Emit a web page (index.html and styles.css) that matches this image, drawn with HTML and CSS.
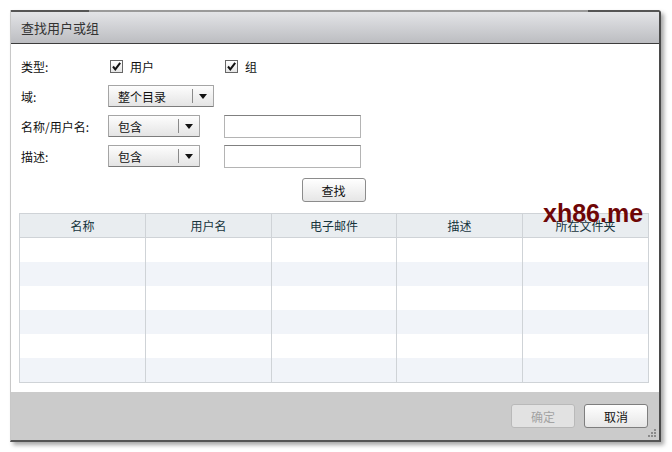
FILE: index.html
```html
<!DOCTYPE html>
<html>
<head>
<meta charset="utf-8">
<link rel="stylesheet" href="styles.css">
</head>
<body>
<div class="dialog">
  <div class="topline"></div>
  <div class="header">查找用户或组</div>
  <div class="content">
    <div class="form">
      <div class="row">
        <div class="label">类型:</div>
        <div class="field">
          <label class="check"><span class="box"><svg width="11" height="11" viewBox="0 0 11 11"><path d="M2 5.5 L4.3 8.3 L9.2 1.8" fill="none" stroke="#111" stroke-width="2"/></svg></span>用户</label>
          <label class="check second"><span class="box"><svg width="11" height="11" viewBox="0 0 11 11"><path d="M2 5.5 L4.3 8.3 L9.2 1.8" fill="none" stroke="#111" stroke-width="2"/></svg></span>组</label>
        </div>
      </div>
      <div class="row">
        <div class="label">域:</div>
        <div class="field">
          <div class="select wide"><span class="stext">整个目录</span><span class="sep"></span><span class="arrow"></span></div>
        </div>
      </div>
      <div class="row">
        <div class="label">名称/用户名:</div>
        <div class="field">
          <div class="select"><span class="stext">包含</span><span class="sep"></span><span class="arrow"></span></div>
          <div class="input"></div>
        </div>
      </div>
      <div class="row">
        <div class="label">描述:</div>
        <div class="field">
          <div class="select"><span class="stext">包含</span><span class="sep"></span><span class="arrow"></span></div>
          <div class="input"></div>
        </div>
      </div>
    </div>
    <div class="searchrow"><button class="btn search">查找</button></div>
    <div class="table">
      <div class="thead">
        <div class="th">名称</div><div class="th">用户名</div><div class="th">电子邮件</div><div class="th">描述</div><div class="th">所在文件夹</div>
      </div>
      <div class="tr"><div></div><div></div><div></div><div></div><div></div></div>
      <div class="tr alt"><div></div><div></div><div></div><div></div><div></div></div>
      <div class="tr"><div></div><div></div><div></div><div></div><div></div></div>
      <div class="tr alt"><div></div><div></div><div></div><div></div><div></div></div>
      <div class="tr"><div></div><div></div><div></div><div></div><div></div></div>
      <div class="tr alt"><div></div><div></div><div></div><div></div><div></div></div>
    </div>
  </div>
  <div class="footer">
    <button class="btn disabled">确定</button>
    <button class="btn cancel">取消</button>
    <svg class="grip" width="10" height="10" viewBox="0 0 10 10"><g fill="#8a8a8a"><rect x="7" y="1" width="2" height="2"/><rect x="4" y="4" width="2" height="2"/><rect x="7" y="4" width="2" height="2"/><rect x="1" y="7" width="2" height="2"/><rect x="4" y="7" width="2" height="2"/><rect x="7" y="7" width="2" height="2"/></g></svg>
  </div>
</div>
<div class="watermark">xh86.me</div>
</body>
</html>
```
FILE: styles.css
```css
html, body {
  margin: 0;
  padding: 0;
  background: #fff;
}
body {
  width: 672px;
  height: 452px;
  position: relative;
  overflow: hidden;
  font-family: "Noto Sans CJK SC", "Liberation Sans", sans-serif;
  font-size: 12px;
  color: #111;
}
.dialog {
  position: absolute;
  left: 10px;
  top: 10px;
  width: 648px;
  height: 430px;
  border-left: 1px solid #c8c8c8;
  border-right: 2px solid #4a4a4a;
  border-bottom: 2px solid #555;
  box-shadow: 3px 3px 4px rgba(0,0,0,0.35);
  border-top-right-radius: 3px;
  display: flex;
  flex-direction: column;
  background: #fff;
}
.topline {
  height: 2px;
  background: linear-gradient(to right, #555 0, #555 78px, #9a9a9a 78px, #9a9a9a 577px, #555 577px);
}
.header {
  height: 31px;
  border-bottom: 1px solid #3c3c3c;
  background: linear-gradient(#e3e4e7, #bcbdc1);
  font-size: 13px;
  color: #333;
  line-height: 31px;
  padding-left: 10px;
}
.content {
  flex: 1;
  padding: 7px 0 0 0;
}
.form {
  padding-left: 10px;
}
.row {
  height: 30px;
  display: flex;
  align-items: center;
}
.label {
  width: 87px;
  flex: none;
  font-size: 12px;
}
.field {
  display: flex;
  align-items: center;
}
.check {
  display: flex;
  align-items: center;
  font-size: 12px;
  margin-left: 2px;
  width: 115px;
}
.check.second {
  margin-left: 0;
}
.box {
  width: 11px;
  height: 11px;
  border: 1px solid #666;
  background: linear-gradient(#fff, #e6e6e6);
  margin-right: 7px;
  display: flex;
}
.select {
  height: 20px;
  width: 90px;
  border: 1px solid #a5a5a5;
  border-bottom-color: #7c7c7c;
  border-radius: 1px;
  background: linear-gradient(#fdfdfd, #e4e4e4);
  display: flex;
  align-items: center;
  font-size: 12px;
  position: relative;
}
.select.wide {
  width: 104px;
}
.stext {
  padding-left: 9px;
  flex: 1;
}
.sep {
  width: 1px;
  height: 14px;
  background: #8a8a8a;
  margin-right: 6px;
}
.arrow {
  width: 0;
  height: 0;
  border-left: 4px solid transparent;
  border-right: 4px solid transparent;
  border-top: 5px solid #111;
  margin-right: 6px;
}
.input {
  margin-left: 24px;
  width: 135px;
  height: 21px;
  border: 1px solid #b4b4b4;
  border-top-color: #808080;
  background: #fff;
}
.searchrow {
  display: flex;
  justify-content: center;
  margin-top: 7px;
}
.btn {
  font-family: "Noto Sans CJK SC", "Liberation Sans", sans-serif;
  font-size: 12px;
  width: 64px;
  height: 24px;
  border: 1px solid #8c8c8c;
  border-radius: 3px;
  background: linear-gradient(#ffffff, #e6e6e6);
  color: #111;
  padding: 0;
}
.search {
  margin-right: 3px;
}
.table {
  margin: 11px 0 0 8px;
  width: 628px;
  border: 1px solid #cfd3d7;
}
.thead, .tr {
  display: grid;
  grid-template-columns: 126px 126px 125px 126px 1fr;
}
.thead {
  height: 23px;
  background: #e9edf0;
  border-bottom: 1px solid #cfd3d7;
}
.th {
  text-align: center;
  line-height: 23px;
  color: #16343c;
  font-size: 12px;
  border-right: 1px solid #cfd3d7;
}
.th:last-child, .tr div:last-child {
  border-right: none;
}
.tr {
  height: 24px;
}
.tr div {
  border-right: 1px solid #cfd3d7;
}
.tr.alt {
  background: #f1f4f9;
}
.footer {
  height: 48px;
  background: #cbcbcb;
  display: flex;
  justify-content: flex-end;
  align-items: flex-start;
  padding: 12px 11px 0 0;
  box-sizing: border-box;
  gap: 9px;
  position: relative;
}
.disabled {
  background: #e2e2e2;
  border-color: #b9b9b9;
  color: #a3a3a3;
}
.cancel {
  border-color: #7e7e7e;
}
.grip {
  position: absolute;
  right: 2px;
  bottom: 2px;
}
.watermark {
  position: absolute;
  left: 543px;
  top: 199px;
  font-family: "Liberation Sans", sans-serif;
  font-weight: bold;
  font-size: 25px;
  color: #6e0606;
  letter-spacing: 0px;
}
```
